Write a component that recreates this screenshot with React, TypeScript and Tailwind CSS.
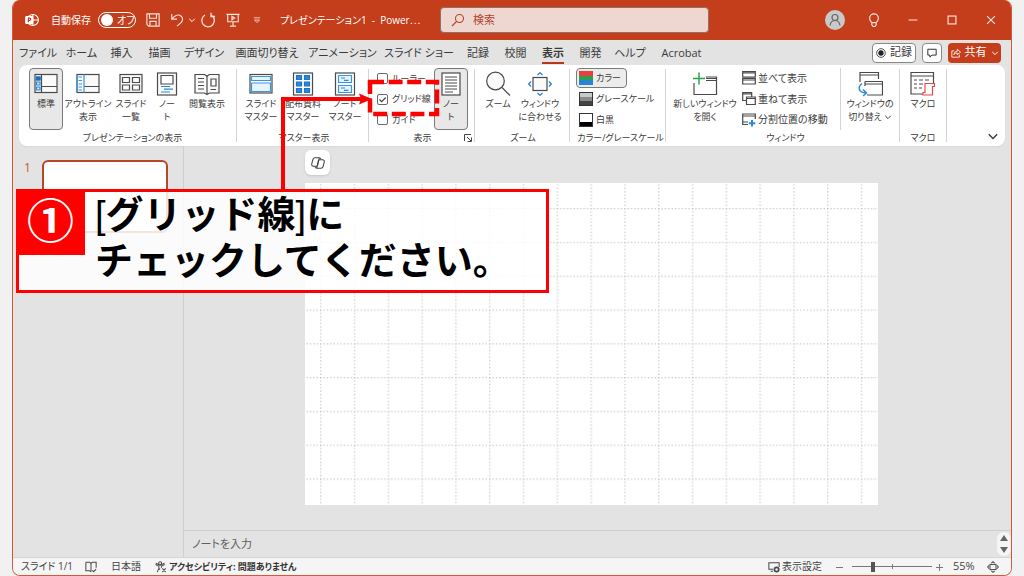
import type { ReactNode } from "react";

type IconProps = { className?: string };

function Svg({ box, className, children }: { box: string; className: string; children: ReactNode }) {
  return (
    <svg viewBox={box} className={`shrink-0 ${className}`} fill="none" stroke="#4a4a4a" strokeWidth="1.2" aria-hidden="true">
      {children}
    </svg>
  );
}

/* ---------- ribbon icons ---------- */

const NormalViewIcon = () => (
  <Svg box="0 0 24 24" className="size-6">
    <rect x="1" y="2.5" width="22" height="18" fill="#fafafa" />
    <path d="M7.5 2.5v18M7.5 14.5H23" />
    <path d="M2.5 5h3.5v3H2.5zM2.5 10h3.5v3H2.5zM2.5 15h3.5v3H2.5z" stroke="#2b88d8" fill="#cfe6f8" />
    <path d="M2.5 5h3.5v3H2.5z" stroke="#1a6fc0" fill="#1a6fc0" />
  </Svg>
);
const OutlineIcon = () => (
  <Svg box="0 0 24 24" className="size-6">
    <rect x="1" y="2.5" width="22" height="18" fill="#fafafa" />
    <path d="M8 14.5h15" />
    <path d="M8 2.5v18M1 2.5v18M2.5 5H6M2.5 8.5H6M2.5 12H6M2.5 15H6M2.5 18H6" stroke="#3a96dd" />
  </Svg>
);
const SorterIcon = () => (
  <Svg box="0 0 24 24" className="size-6">
    <rect x="1" y="2.5" width="22" height="18" fill="#fafafa" />
    <path d="M3.5 5.5h7v5h-7zM13.5 5.5h7v5h-7zM3.5 13h7v5h-7zM13.5 13h7v5h-7z" />
  </Svg>
);
const NotesPageIcon = () => (
  <Svg box="0 0 24 24" className="size-6">
    <rect x="2.5" y="1" width="19" height="22" fill="#fafafa" />
    <path d="M6 3.5h12v8.5H6z" fill="#fff" />
    <path d="M6 14.5h9M9 17.2h9M6 20h9" stroke="#2b88d8" />
  </Svg>
);
const ReadingIcon = () => (
  <Svg box="0 0 26 24" className="h-6 w-[26px]">
    <path d="M1 2.5h9.5L13 4l2.5-1.5H25V21h-9.5L13 22.5 10.5 21H1z" fill="#fafafa" />
    <path d="M13 4v18M4 6.5h6M4 10h6M4 13.5h6M4 17h6M17 7h5v7h-5zM16.5 17.5H22" />
  </Svg>
);
const SlideMasterIcon = () => (
  <Svg box="0 0 24 24" className="size-6">
    <rect x="1" y="2.5" width="22" height="18.5" fill="#fff" />
    <path d="M2.5 4.5h19v4h-19zM2.5 11h19v8.5h-19z" stroke="#3a96dd" fill="#e8f4fc" />
  </Svg>
);
const HandoutIcon = () => (
  <Svg box="0 0 24 24" className="size-6">
    <rect x="2.5" y="1" width="19" height="22" fill="#fff" />
    <path
      d="M5.5 3.5h5v4h-5zM13.5 3.5h5v4h-5zM5.5 10h5v4h-5zM13.5 10h5v4h-5zM5.5 16.5h5v4h-5zM13.5 16.5h5v4h-5z"
      stroke="#1f74c4"
      fill="#2b88d8"
    />
  </Svg>
);
const NotesMasterIcon = () => (
  <Svg box="0 0 24 24" className="size-6">
    <rect x="2.5" y="1" width="19" height="22" fill="#fff" />
    <path d="M5.5 3.5h13v7h-13zM5.5 13.5h13v7h-13z" stroke="#3a96dd" fill="#e8f4fc" />
    <path d="M8 6h4M11 8.3h4.5M8 16h4M11 18.3h4.5" stroke="#2b88d8" />
  </Svg>
);
const NotesPaneIcon = () => (
  <Svg box="0 0 24 24" className="size-6">
    <rect x="3" y="1" width="18" height="22" fill="#fff" />
    <path d="M6 5h12M6 8h12M6 11h12M6 14h12M6 17h12M6 20h8" strokeWidth="1" />
  </Svg>
);
const MagnifierIcon = () => (
  <Svg box="0 0 26 26" className="size-[26px]">
    <circle cx="10.5" cy="10" r="8.8" fill="#fafafa" />
    <path d="M17 16.5 25 24.5" />
  </Svg>
);
const FitIcon = () => (
  <Svg box="0 0 24 24" className="size-6">
    <rect x="5" y="5.5" width="14" height="13" fill="#fafafa" />
    <path
      d="M9.5 3 12 .8 14.5 3M9.5 21l2.5 2.2 2.5-2.2M3 9.5.8 12 3 14.5M21 9.5l2.2 2.5-2.2 2.5"
      stroke="#2b88d8"
      strokeWidth="1.4"
    />
  </Svg>
);
const NewWindowIcon = () => (
  <Svg box="0 0 26 24" className="h-6 w-[26px]">
    <path d="M2 11v11.5h22.5V5H14M14 8.5h10.5M14 6.5h10.5" />
    <path d="M7 .5v12M1 6.5h12" stroke="#2fa04c" strokeWidth="1.5" />
  </Svg>
);
const SwitchWindowIcon = () => (
  <Svg box="0 0 26 26" className="size-[26px]">
    <path d="M3 11V1.5h18.5V8M3 4h18.5" />
    <path d="M8 10.5h17.5V24H10M8 13h17.5M8 10.5V15" />
    <path d="M5 12.5c-4 3-4.5 9 4 9.5M6 18.5l3.5 3.5L6 25" stroke="#2b88d8" strokeWidth="1.5" />
  </Svg>
);
const MacroIcon = () => (
  <Svg box="0 0 26 26" className="size-[26px]">
    <path d="M23.5 12V1.5H1V23h12M1 5h22.5" />
    <path d="M4 9h3M9 9h4M15 9h4M4 13h3M9 13h4M4 17h3M9 17h3" />
    <path d="M15 12.5h9.5v3h-2V24H13v-2.5h2zM13 24h8" stroke="#e8474b" fill="#fff" />
  </Svg>
);

/* Small icons in the window list */
const ArrangeIcon = () => (
  <Svg box="0 0 14 14" className="size-3.5">
    <path d="M.7.7h12.6v5.5H.7zM.7 7.5h12.6V13H.7zM.7 2h12.6M.7 9h12.6" />
  </Svg>
);
const CascadeIcon = () => (
  <Svg box="0 0 14 14" className="size-3.5">
    <path d="M4.5 8.5H.7V.7h9v3.8M.7 2h9M4.5 5h8.8v7.5H4.5zM4.5 6.5h8.8" />
  </Svg>
);
const SplitIcon = () => (
  <Svg box="0 0 14 14" className="size-3.5">
    <path d="M6 11.5H.7V1h12.6v5M.7 3h12.6M.7 9H6" />
    <path d="M10 7v6.5M6.8 10.2h6.5" stroke="#2b88d8" strokeWidth="2" />
  </Svg>
);
const Chevron = ({ className = "size-2" }: IconProps) => (
  <svg viewBox="0 0 10 10" className={`shrink-0 ${className}`} fill="none" stroke="currentColor" strokeWidth="1.2" aria-hidden="true">
    <path d="M1.5 3.5 5 7l3.5-3.5" />
  </svg>
);

/* ---------- title bar ---------- */

function TitleIcon({ label, className, children }: { label: string; className: string; children: ReactNode }) {
  return (
    <button type="button" aria-label={label} className="flex shrink-0 items-center justify-center">
      <svg viewBox="0 0 16 16" className={className} fill="none" stroke="#fbe3dc" strokeWidth="1.3" aria-hidden="true">
        {children}
      </svg>
    </button>
  );
}

function TitleBar() {
  return (
    <header className="flex h-10 shrink-0 items-center bg-[#c43e1c] text-[10px] text-white">
      <div className="flex w-[427px] shrink-0 items-center pl-3">
        <svg viewBox="0 0 16 16" className="size-3.5" fill="none" stroke="#fff" strokeWidth="1.3" aria-hidden="true">
          <circle cx="9" cy="8" r="6.3" />
          <path d="M9 1.7V8h6.3M9 8v6" />
          <rect x=".8" y="4" width="8" height="8" rx="1" fill="#fff" />
          <path d="M3.8 10.5V5.8h1.4a1.3 1.3 0 0 1 0 2.7H3.8" stroke="#c43e1c" />
        </svg>
        <span className="w-[45px] shrink-0 pl-3 whitespace-nowrap" id="autosave">
          自動保存
        </span>
        <button
          type="button"
          role="switch"
          aria-checked="false"
          aria-labelledby="autosave"
          className="ml-3.5 flex h-4 w-[38px] shrink-0 items-center gap-1 rounded-full border border-white pl-0.5"
        >
          <span className="size-3 rounded-full bg-white" />
          オフ
        </button>
        <div className="ml-2.5 flex shrink-0 items-center">
          <TitleIcon label="上書き保存" className="size-3.5">
            <path d="M1 1h14v14H3l-2-2zM4 1v5h8V1M4.5 15V9.5h7V15" />
          </TitleIcon>
          <span className="w-2.5" />
          <TitleIcon label="元に戻す" className="size-3.5">
            <path d="M2 1v6h6M2.3 6.7C6 2.5 10 1.5 12.5 3.5S15 9 12 11.5L8 15" />
          </TitleIcon>
          <Chevron className="mx-1 size-2" />
          <TitleIcon label="やり直し" className="size-4">
            <path d="M5 3a6.300 6.300 0 1 0 6.500.2M11 .8v3.700h4" />
          </TitleIcon>
          <span className="w-2.5" />
          <TitleIcon label="最初から開始" className="size-3.5">
            <path d="M.5 1.5h15M2 1.5V10h12V1.5M8 10v5M4.500 15h7M6.800 3.800v4l3-2z" />
          </TitleIcon>
          <span className="w-3" />
          <TitleIcon label="クイック アクセス ツール バーのユーザー設定" className="size-2.5">
            <path d="M3 4.5h10M4 8h8l-4 4z" />
          </TitleIcon>
        </div>
        <h1 className="ml-[18px] whitespace-nowrap">プレゼンテーション1&nbsp; -&nbsp; Power⋯</h1>
      </div>
      <label className="flex h-[26px] min-w-0 flex-1 items-center gap-2 rounded-sm border border-[#8d7069] bg-[#efd7d1] pl-2.5 text-[#b0432a]">
        <svg viewBox="0 0 14 14" className="size-3.5 shrink-0" fill="none" stroke="currentColor" strokeWidth="1.1" aria-hidden="true">
          <circle cx="8.5" cy="5.5" r="4" />
          <path d="M5.5 8.5 1 13" />
        </svg>
        <input
          type="search"
          aria-label="検索"
          placeholder="検索"
          className="min-w-0 flex-1 bg-transparent text-[11px] outline-none placeholder:text-[#b0432a]"
        />
      </label>
      <div className="flex w-[302px] shrink-0 items-center justify-end gap-[19px] pr-2.5">
        <button type="button" aria-label="アカウント" className="flex size-5 items-center justify-center rounded-full bg-[#c9c9c9]">
          <svg viewBox="0 0 20 20" className="size-5" fill="none" stroke="#666" strokeWidth="1.2" aria-hidden="true">
            <circle cx="10" cy="7.5" r="3" />
            <path d="M5 15.5c.5-3.5 2.5-5 5-5s4.500 1.500 5 5" />
          </svg>
        </button>
        <TitleIcon label="ヒント" className="mx-[3px] size-3.5">
          <path d="M5.500 11C3.500 9 3 7.500 3 6a5 5 0 0 1 10 0c0 1.500-.5 3-2.500 5zM5.500 11v2.500l1.500 2h2l1.500-2V11" />
        </TitleIcon>
        <TitleIcon label="最小化" className="mx-[3px] size-3.5">
          <path d="M3 8h10" />
        </TitleIcon>
        <TitleIcon label="最大化" className="mx-[3px] size-3.5">
          <rect x="3.5" y="3.5" width="9" height="9" />
        </TitleIcon>
        <TitleIcon label="閉じる" className="mx-[3px] size-3.5">
          <path d="m3.500 3.500 9 9M12.500 3.500l-9 9" />
        </TitleIcon>
      </div>
    </header>
  );
}

/* ---------- tabs ---------- */

const tabs = [
  { name: "ファイル", width: "w-[46px]" },
  { name: "ホーム", width: "w-[41px]" },
  { name: "挿入", width: "w-[39px]" },
  { name: "描画", width: "w-[37px]" },
  { name: "デザイン", width: "w-[52px]" },
  { name: "画面切り替え", width: "w-[74px]" },
  { name: "アニメーション", width: "w-[77px]" },
  { name: "スライド ショー", width: "w-[76px]" },
  { name: "記録", width: "w-[42px]" },
  { name: "校閲", width: "w-[33px]" },
  { name: "表示", width: "w-[42px]" },
  { name: "開発", width: "w-[33px]" },
  { name: "ヘルプ", width: "w-[46px]" },
  { name: "Acrobat", width: "w-[57px]" },
];

function TabStrip() {
  return (
    <div className="flex h-[25px] shrink-0 items-center pr-2.5 pl-0.5 text-[11px]">
      <nav className="flex items-center whitespace-nowrap">
        {tabs.map(({ name, width }) => (
          <a
            key={name}
            href="#ribbon"
            aria-current={name === "表示" ? "page" : undefined}
            className={`flex shrink-0 justify-center ${width}`}
          >
            <span
              className={
                name === "表示"
                  ? "border-b-2 border-[#b7371a] pt-0.5 leading-[18px] font-bold"
                  : "border-b-2 border-transparent pt-0.5 leading-[18px]"
              }
            >
              {name}
            </span>
          </a>
        ))}
      </nav>
      <div className="ml-auto flex items-center gap-1.5">
        <button type="button" className="flex h-5 w-11 items-center justify-center gap-1 rounded border border-[#8a8a8a] bg-white">
          <svg viewBox="0 0 12 12" className="size-2.5" aria-hidden="true">
            <circle cx="6" cy="6" r="5.2" fill="none" stroke="#333" />
            <circle cx="6" cy="6" r="3.2" fill="#222" />
          </svg>
          記録
        </button>
        <button type="button" aria-label="コメント" className="flex h-5 w-5 items-center justify-center rounded border border-[#8a8a8a] bg-white">
          <svg viewBox="0 0 12 12" className="size-2.5" fill="none" stroke="#333" strokeWidth="1.2" aria-hidden="true">
            <path d="M1 1.5h10v7H6L3.5 11V8.500H1z" />
          </svg>
        </button>
        <button type="button" className="flex h-5 w-[53px] items-center justify-center gap-1 rounded bg-[#c43e1c] text-white">
          <svg viewBox="0 0 12 12" className="size-2.5" fill="none" stroke="#fff" aria-hidden="true">
            <path d="M4 3.5H1V11h9V8M3.5 8C4 5 5.500 4 7.500 4V1.500L11.500 5 7.500 8V6C5.500 6 4.500 6.500 3.500 8z" />
          </svg>
          共有
          <Chevron className="size-2" />
        </button>
      </div>
    </div>
  );
}

/* ---------- ribbon ---------- */

function Group({ label, className, children }: { label: string; className: string; children: ReactNode }) {
  return (
    <section
      aria-label={label}
      className={`relative my-1 flex shrink-0 flex-col border-r border-[#d4d4d4] ${className}`}
    >
      <div className="-mt-px flex h-[62px] shrink-0">{children}</div>
      <div className="text-center text-[9px] leading-4 whitespace-nowrap">{label}</div>
    </section>
  );
}

function BigButton({
  icon,
  lines,
  className,
  pressed = false,
  menu = false,
}: {
  icon: ReactNode;
  lines: string[];
  className: string;
  pressed?: boolean;
  menu?: boolean;
}) {
  return (
    <button
      type="button"
      aria-pressed={pressed || undefined}
      className={`flex shrink-0 flex-col items-center rounded border pt-0.5 text-[9px] ${
        pressed ? "border-[#7a7a7a] bg-[#e8e8e8]" : "border-transparent"
      } ${className}`}
    >
      <span className="flex h-[26px] items-center">{icon}</span>
      {lines.map((line, i) => (
        <span key={line} className="flex items-center gap-0.5 leading-[13px] whitespace-nowrap">
          {line}
          {menu && i === lines.length - 1 && <Chevron className="size-2" />}
        </span>
      ))}
    </button>
  );
}

function CheckRow({ id, label, checked = false }: { id: string; label: string; checked?: boolean }) {
  return (
    <label htmlFor={id} className="flex h-[21px] items-center gap-1 text-[9px] whitespace-nowrap">
      <span className="relative flex size-[11px]">
        <input
          id={id}
          type="checkbox"
          defaultChecked={checked}
          className="peer size-[11px] appearance-none rounded-xs border border-[#6a6a6a] bg-white"
        />
        <svg
          viewBox="0 0 11 11"
          className="pointer-events-none absolute inset-0 hidden size-[11px] peer-checked:block"
          fill="none"
          stroke="#444"
          strokeWidth="1.2"
          aria-hidden="true"
        >
          <path d="m2.5 5.5 2.2 2.2 4-4.2" />
        </svg>
      </span>
      {label}
    </label>
  );
}

function ColorRow({
  colors,
  label,
  className,
  pressed = false,
}: {
  colors: [string, string, string];
  label: string;
  className: string;
  pressed?: boolean;
}) {
  return (
    <button
      type="button"
      className={`flex h-5 items-center gap-[3px] rounded border pl-0.5 text-[9px] whitespace-nowrap ${
        pressed ? "border-[#7a7a7a] bg-[#ececec]" : "border-transparent"
      } ${className}`}
    >
      <svg viewBox="0 0 14 14" className="size-3.5" aria-hidden="true">
        <rect width="14" height="5" fill={colors[0]} />
        <rect y="5" width="14" height="4" fill={colors[1]} />
        <rect y="9" width="14" height="5" fill={colors[2]} />
        {!pressed && <rect x=".5" y=".5" width="13" height="13" fill="none" stroke="#333" />}
      </svg>
      {label}
    </button>
  );
}

function ListButton({ icon, label }: { icon: ReactNode; label: string }) {
  return (
    <button type="button" className="flex h-[21px] items-center gap-0.5 whitespace-nowrap">
      {icon}
      {label}
    </button>
  );
}

function Ribbon() {
  return (
    <div id="ribbon" className="mx-1.5 flex h-[81px] shrink-0 rounded-lg bg-white text-[10px] text-[#3b3b3b] shadow-xs">
      <Group label="プレゼンテーションの表示" className="w-[218px] pl-2.5">
        <BigButton icon={<NormalViewIcon />} lines={["標準"]} className="w-[34px]" pressed />
        <BigButton icon={<OutlineIcon />} lines={["アウトライン", "表示"]} className="w-[50px]" />
        <BigButton icon={<SorterIcon />} lines={["スライド", "一覧"]} className="w-9" />
        <BigButton icon={<NotesPageIcon />} lines={["ノー", "ト"]} className="w-9" />
        <BigButton icon={<ReadingIcon />} lines={["閲覧表示"]} className="w-11" />
      </Group>
      <Group label="マスター表示" className="w-[132px] pl-[3px]">
        <BigButton icon={<SlideMasterIcon />} lines={["スライド", "マスター"]} className="w-[42px]" />
        <BigButton icon={<HandoutIcon />} lines={["配布資料", "マスター"]} className="w-[42px]" />
        <BigButton icon={<NotesMasterIcon />} lines={["ノート", "マスター"]} className="w-[42px]" />
      </Group>
      <Group label="表示" className="w-[106px] pr-1.5 pl-2">
        <div className="flex flex-1 flex-col">
          <CheckRow id="ruler" label="ルーラー" />
          <CheckRow id="gridlines" label="グリッド線" checked />
          <CheckRow id="guides" label="ガイド" />
        </div>
        <BigButton icon={<NotesPaneIcon />} lines={["ノー", "ト"]} className="w-[34px]" pressed />
        <button type="button" aria-label="グリッドの設定" className="absolute right-0.5 bottom-0">
          <svg viewBox="0 0 8 8" className="size-2" fill="none" stroke="#444" aria-hidden="true">
            <path d="M.5 7V.5H7M3 3l4 4M7.5 3.5v4h-4" />
          </svg>
        </button>
      </Group>
      <Group label="ズーム" className="w-[95px] pl-0.5">
        <BigButton icon={<MagnifierIcon />} lines={["ズーム"]} className="w-[42px]" />
        <BigButton icon={<FitIcon />} lines={["ウィンドウ", "に合わせる"]} className="w-[42px]" />
      </Group>
      <Group label="カラー/グレースケール" className="w-24 pl-1.5">
        <div className="flex flex-col gap-px">
          <ColorRow colors={["#e8403a", "#2f9e4f", "#2686d4"]} label="カラー" className="w-[51px]" pressed />
          <ColorRow colors={["#c9c9c9", "#8a8a8a", "#444444"]} label="グレースケール" className="w-[88px]" />
          <ColorRow colors={["#ffffff", "#ffffff", "#000000"]} label="白黒" className="w-[88px]" />
        </div>
      </Group>
      <Group label="ウィンドウ" className="w-[234px] pl-1.5">
        <BigButton icon={<NewWindowIcon />} lines={["新しいウィンドウ", "を開く"]} className="w-[66px]" />
        <div className="ml-1 flex w-[99px] flex-col border-r border-[#d4d4d4]">
          <ListButton icon={<ArrangeIcon />} label="並べて表示" />
          <ListButton icon={<CascadeIcon />} label="重ねて表示" />
          <ListButton icon={<SplitIcon />} label="分割位置の移動" />
        </div>
        <BigButton icon={<SwitchWindowIcon />} lines={["ウィンドウの", "切り替え"]} className="w-[58px]" menu />
      </Group>
      <Group label="マクロ" className="w-[47px]">
        <BigButton icon={<MacroIcon />} lines={["マクロ"]} className="w-[46px]" />
      </Group>
      <button type="button" aria-label="リボンを折りたたむ" className="mt-auto mr-1.5 mb-1 ml-auto">
        <Chevron className="size-3" />
      </button>
    </div>
  );
}

/* ---------- workspace ---------- */

function Gridlines() {
  return (
    <svg className="size-full" aria-hidden="true">
      <defs>
        <pattern id="grid" x="15" y="25" width="33.8" height="33.8" patternUnits="userSpaceOnUse">
          <path d="M.8 0v34" stroke="#bdbdbd" strokeDasharray="1.4 1.98" />
          <path d="M0 .8h34" stroke="#bdbdbd" strokeDasharray="1.4 1.98" />
        </pattern>
      </defs>
      <rect width="100%" height="100%" fill="url(#grid)" />
    </svg>
  );
}

function Workspace() {
  return (
    <main className="flex min-h-0 flex-1">
      <aside className="flex w-[171px] shrink-0 items-start border-r border-[#cfcfcf] pt-3.5 pl-[11px]">
        <span className="w-[18px] text-[12px] leading-4 text-[#d2532f]">1</span>
        <button type="button" aria-label="スライド 1" className="h-[73px] w-[126px] rounded-md border-2 border-[#b7472a] bg-white" />
      </aside>
      <div className="flex min-w-0 flex-1 flex-col">
        <div className="flex min-h-0 flex-1 flex-col pr-[133px] pb-[25px] pl-[121px]">
          <button
            type="button"
            aria-label="Copilot"
            className="mt-1 flex size-[25px] shrink-0 items-center justify-center rounded-md bg-white shadow-sm"
          >
            <svg viewBox="0 0 16 16" className="size-3.5" fill="none" stroke="#444" strokeWidth="1.2" aria-hidden="true">
              <path d="M4.500 2h5c1 0 1.500.6 1.800 1.600M4.500 2C3 2 2.500 3 2.200 4L1 8.500C.5 10.500 1 11.800 2.800 11.800H6c1 0 1.400-.6 1.700-1.500L9.500 2" />
              <path d="M11.500 14h-5c-1 0-1.500-.6-1.800-1.600M11.500 14c1.500 0 2-1 2.300-2L15 7.500c.5-2 0-3.300-1.800-3.300H10c-1 0-1.400.6-1.700 1.500L6.500 14" />
            </svg>
          </button>
          <div className="mt-2 min-h-0 flex-1 bg-white">
            <Gridlines />
          </div>
        </div>
        <div className="flex h-[27px] shrink-0 items-center border-t border-[#cfcfcf]">
          <textarea
            aria-label="ノート"
            placeholder="ノートを入力"
            rows={1}
            className="h-[18px] min-w-0 flex-1 resize-none bg-transparent pl-2 text-[11px] leading-[18px] outline-none placeholder:text-[#5f5f5f]"
          />
          <div className="flex w-3.5 shrink-0 flex-col items-center rounded-full bg-[#f5f5f5]">
            <button type="button" aria-label="前のスライド" className="flex h-3 items-center">
              <svg viewBox="0 0 8 6" className="h-1.5 w-2" fill="#666" aria-hidden="true">
                <path d="M4 0l4 6H0z" />
              </svg>
            </button>
            <button type="button" aria-label="次のスライド" className="flex h-3 items-center">
              <svg viewBox="0 0 8 6" className="h-1.5 w-2" fill="#666" aria-hidden="true">
                <path d="M4 6l4-6H0z" />
              </svg>
            </button>
          </div>
        </div>
      </div>
    </main>
  );
}

function StatusBar() {
  return (
    <footer className="flex h-[18px] shrink-0 items-center border-t border-[#d6d6d6] bg-[#f5f5f5] pr-3 pl-2 text-[10px] whitespace-nowrap text-[#444]">
      <span className="w-[64px]">スライド 1/1</span>
      <Svg box="0 0 14 14" className="size-3">
        <path d="M7 3v9.500M1 1.500h4.500L7 3l1.500-1.500H13V8M1 1.500v10h4.500L7 12.500M8.500 11l1.500 1.500L13 9.500" />
      </Svg>
      <span className="ml-3.5">日本語</span>
      <Svg box="0 0 14 14" className="ml-3.5 size-3">
        <circle cx="6" cy="2.5" r="1.7" />
        <path d="M1 4.500 4.500 6v3L2.500 13M11 4.500 7.500 6v2M1 4.500l.5-1.500L6 5l4.500-2 .5 1.500M5 10l1-1M8.500 8.500l4 4.500M12.500 8.500l-4 4.500" />
      </Svg>
      <span className="ml-0.5 text-[9px] font-bold text-[#333]">アクセシビリティ: 問題ありません</span>
      <div className="ml-auto flex items-center">
        <Svg box="0 0 14 14" className="size-3">
          <path d="M6 9.500H1V2h12v5M3 12h3" />
          <circle cx="10" cy="10" r="2.5" strokeWidth="2" />
        </Svg>
        <span className="ml-0.5 w-[54px]">表示設定</span>
        <button type="button" aria-label="縮小" className="flex w-4 items-center">
          <svg viewBox="0 0 8 8" className="size-2" stroke="#777" aria-hidden="true">
            <path d="M0 4.500h7" />
          </svg>
        </button>
        <input
          type="range"
          aria-label="ズーム"
          min={10}
          max={190}
          defaultValue={55}
          className="h-3 w-20 appearance-none bg-transparent bg-[linear-gradient(#777,#777),linear-gradient(#777,#777)] bg-[length:100%_1px,1px_5px] bg-center bg-no-repeat [&::-webkit-slider-thumb]:h-2.5 [&::-webkit-slider-thumb]:w-1 [&::-webkit-slider-thumb]:appearance-none [&::-webkit-slider-thumb]:bg-[#555]"
        />
        <button type="button" aria-label="拡大" className="ml-1 flex w-[17px] items-center">
          <svg viewBox="0 0 8 8" className="size-2" stroke="#777" aria-hidden="true">
            <path d="M0 4.500h7M3.500 1v7" />
          </svg>
        </button>
        <span className="w-[34px] text-[11px]">55%</span>
        <button type="button" aria-label="ウィンドウに合わせる" className="flex">
          <Svg box="0 0 14 14" className="size-3">
            <rect x="3.5" y="4" width="7" height="6" />
            <path d="M5 2.500 7 .8l2 1.700M5 11.500l2 1.700 2-1.700M2.500 5 .8 7l1.700 2M11.500 5l1.700 2-1.700 2" />
          </Svg>
        </button>
      </div>
    </footer>
  );
}

/* ---------- tutorial annotation ---------- */

function Annotation() {
  return (
    <>
      <svg viewBox="0 0 180 112" className="pointer-events-none absolute top-[77px] left-[270px] h-28 w-[180px]" fill="none" stroke="#ff0000" aria-hidden="true">
        <path d="M13 112V22h80" strokeWidth="4" />
        <path d="m89 16.500 13 5.500-13 5.500 2-5.500z" fill="#ff0000" stroke="none" />
        <rect x="100" y="5" width="67" height="32" strokeWidth="4.5" strokeDasharray="14 4.6" />
      </svg>
      <div className="absolute top-[189px] left-4 flex w-[533px] border-[3px] border-[#ff0000] bg-white/85">
        <span className="-mt-[3px] -ml-[3px] flex h-[66px] w-[69px] shrink-0 items-center justify-center bg-[#ff0000] pb-1 text-[47px] leading-none font-bold text-white">
          ①
        </span>
        <p className="pb-1.5 pl-2.5 font-['Liberation_Sans','Noto_Sans_CJK_JP',sans-serif] text-[38px] leading-[46px] font-bold whitespace-nowrap text-black">
          <span className="font-normal">[</span>グリッド線<span className="font-normal">]</span>に
          <br />
          チェックしてください。
        </p>
      </div>
    </>
  );
}

export default function App() {
  return (
    <div className="relative flex h-screen flex-col bg-[#f1f1f1] px-3 font-['Open_Sans','Noto_Sans_CJK_JP',sans-serif] text-[#3b3b3b]">
      <div className="flex min-h-0 flex-1 flex-col overflow-hidden rounded-lg border-x border-b border-[#d4593c] bg-[#e3e3e3] [font-feature-settings:'palt']">
        <TitleBar />
        <TabStrip />
        <Ribbon />
        <Workspace />
        <StatusBar />
      </div>
      <Annotation />
    </div>
  );
}
